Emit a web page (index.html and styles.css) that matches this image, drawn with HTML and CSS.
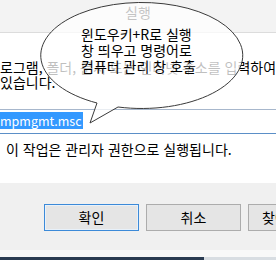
FILE: index.html
```html
<!DOCTYPE html>
<html lang="ko">
<head>
<meta charset="utf-8">
<link rel="stylesheet" href="styles.css">
</head>
<body>
<div class="dialog">
  <div class="titlebar"><span class="title">실행</span></div>
  <div class="content">
    <p class="desc">로그램, 폴더, 문서 또는 인터넷 주소를 입력하여<br>있습니다.</p>
    <div class="combo"><span class="sel">mpmgmt.msc</span></div>
    <p class="admin">이 작업은 관리자 권한으로 실행됩니다.</p>
  </div>
  <div class="footer">
    <button class="btn default">확인</button>
    <button class="btn">취소</button>
    <button class="btn browse">찾아보기(B)...</button>
  </div>
  <div class="strip"></div>
  <div class="taskbar"><div class="dark"></div></div>
</div>
<div class="callout">
  <svg class="bubble" width="276" height="140" viewBox="0 0 276 140">
    <path d="M 97 103 L 90 123 L 118 107 A 101 53 0 1 0 97 103 Z" fill="#ffffff" fill-opacity="0.75" stroke="#3a3a3a" stroke-width="1"/>
  </svg>
  <div class="callout-text">윈도우키+R로 실행<br>창 띄우고 명령어로<br>컴퓨터 관리 창 호출</div>
</div>
</body>
</html>
```
FILE: styles.css
```css
* { box-sizing: border-box; }
html, body { margin: 0; padding: 0; }
body {
  width: 276px;
  height: 260px;
  overflow: hidden;
  position: relative;
  font-family: "Noto Sans CJK KR", "Noto Sans", sans-serif;
  font-size: 14px;
  color: #000;
  background: #fff;
}
.dialog { width: 276px; display: flex; flex-direction: column; }
.titlebar {
  height: 33px;
  background: #f3f3f3;
  border-bottom: 1px solid #dcdcdc;
  display: flex;
  justify-content: center;
  padding-top: 4px;
}
.title { font-size: 14px; line-height: 16px; color: #111; }
.content {
  height: 150px;
  background: #fff;
  overflow: hidden;
}
.desc {
  margin: 27px 0 0 0;
  line-height: 15px;
  white-space: nowrap;
}
.combo {
  margin-top: 19px;
  height: 25px;
  width: 300px;
  border-top: 1px solid #a7b7cc;
  border-bottom: 1px solid #5b8fc7;
  padding-top: 0;
}
.sel {
  display: inline-block;
  background: #3399ff;
  color: #fff;
  font-size: 12.5px;
  line-height: 17px;
  height: 17px;
  padding-right: 1px;
}
.admin {
  margin: 8px 0 0 6px;
  line-height: 15px;
  white-space: nowrap;
}
.footer {
  height: 67px;
  background: #f0f0f0;
  display: flex;
  gap: 7px;
  padding: 21px 0 0 44px;
  align-items: flex-start;
  overflow: hidden;
}
.btn {
  flex: none;
  width: 95px;
  height: 27px;
  background: #e5e5e5;
  border: 1px solid #acacac;
  font-family: inherit;
  font-size: 14px;
  color: #000;
  padding: 0;
  line-height: 25px;
}
.btn.default { border-color: #3c8ad8; box-shadow: inset 0 0 0 1px #e8f1fa; }
.btn.browse { text-align: left; padding-left: 13px; white-space: nowrap; }
.strip { height: 7px; background: #f8f8f8; }
.taskbar { height: 3px; background: #d8dde2; display: flex; }
.dark { width: 204px; background: #2b3c52; }
.callout { position: absolute; left: 0; top: 0; width: 276px; height: 140px; }
.bubble { position: absolute; left: 0; top: 0; }
.callout-text {
  position: absolute;
  left: 81px;
  top: 26px;
  font-size: 14px;
  line-height: 16px;
  white-space: nowrap;
}
```
